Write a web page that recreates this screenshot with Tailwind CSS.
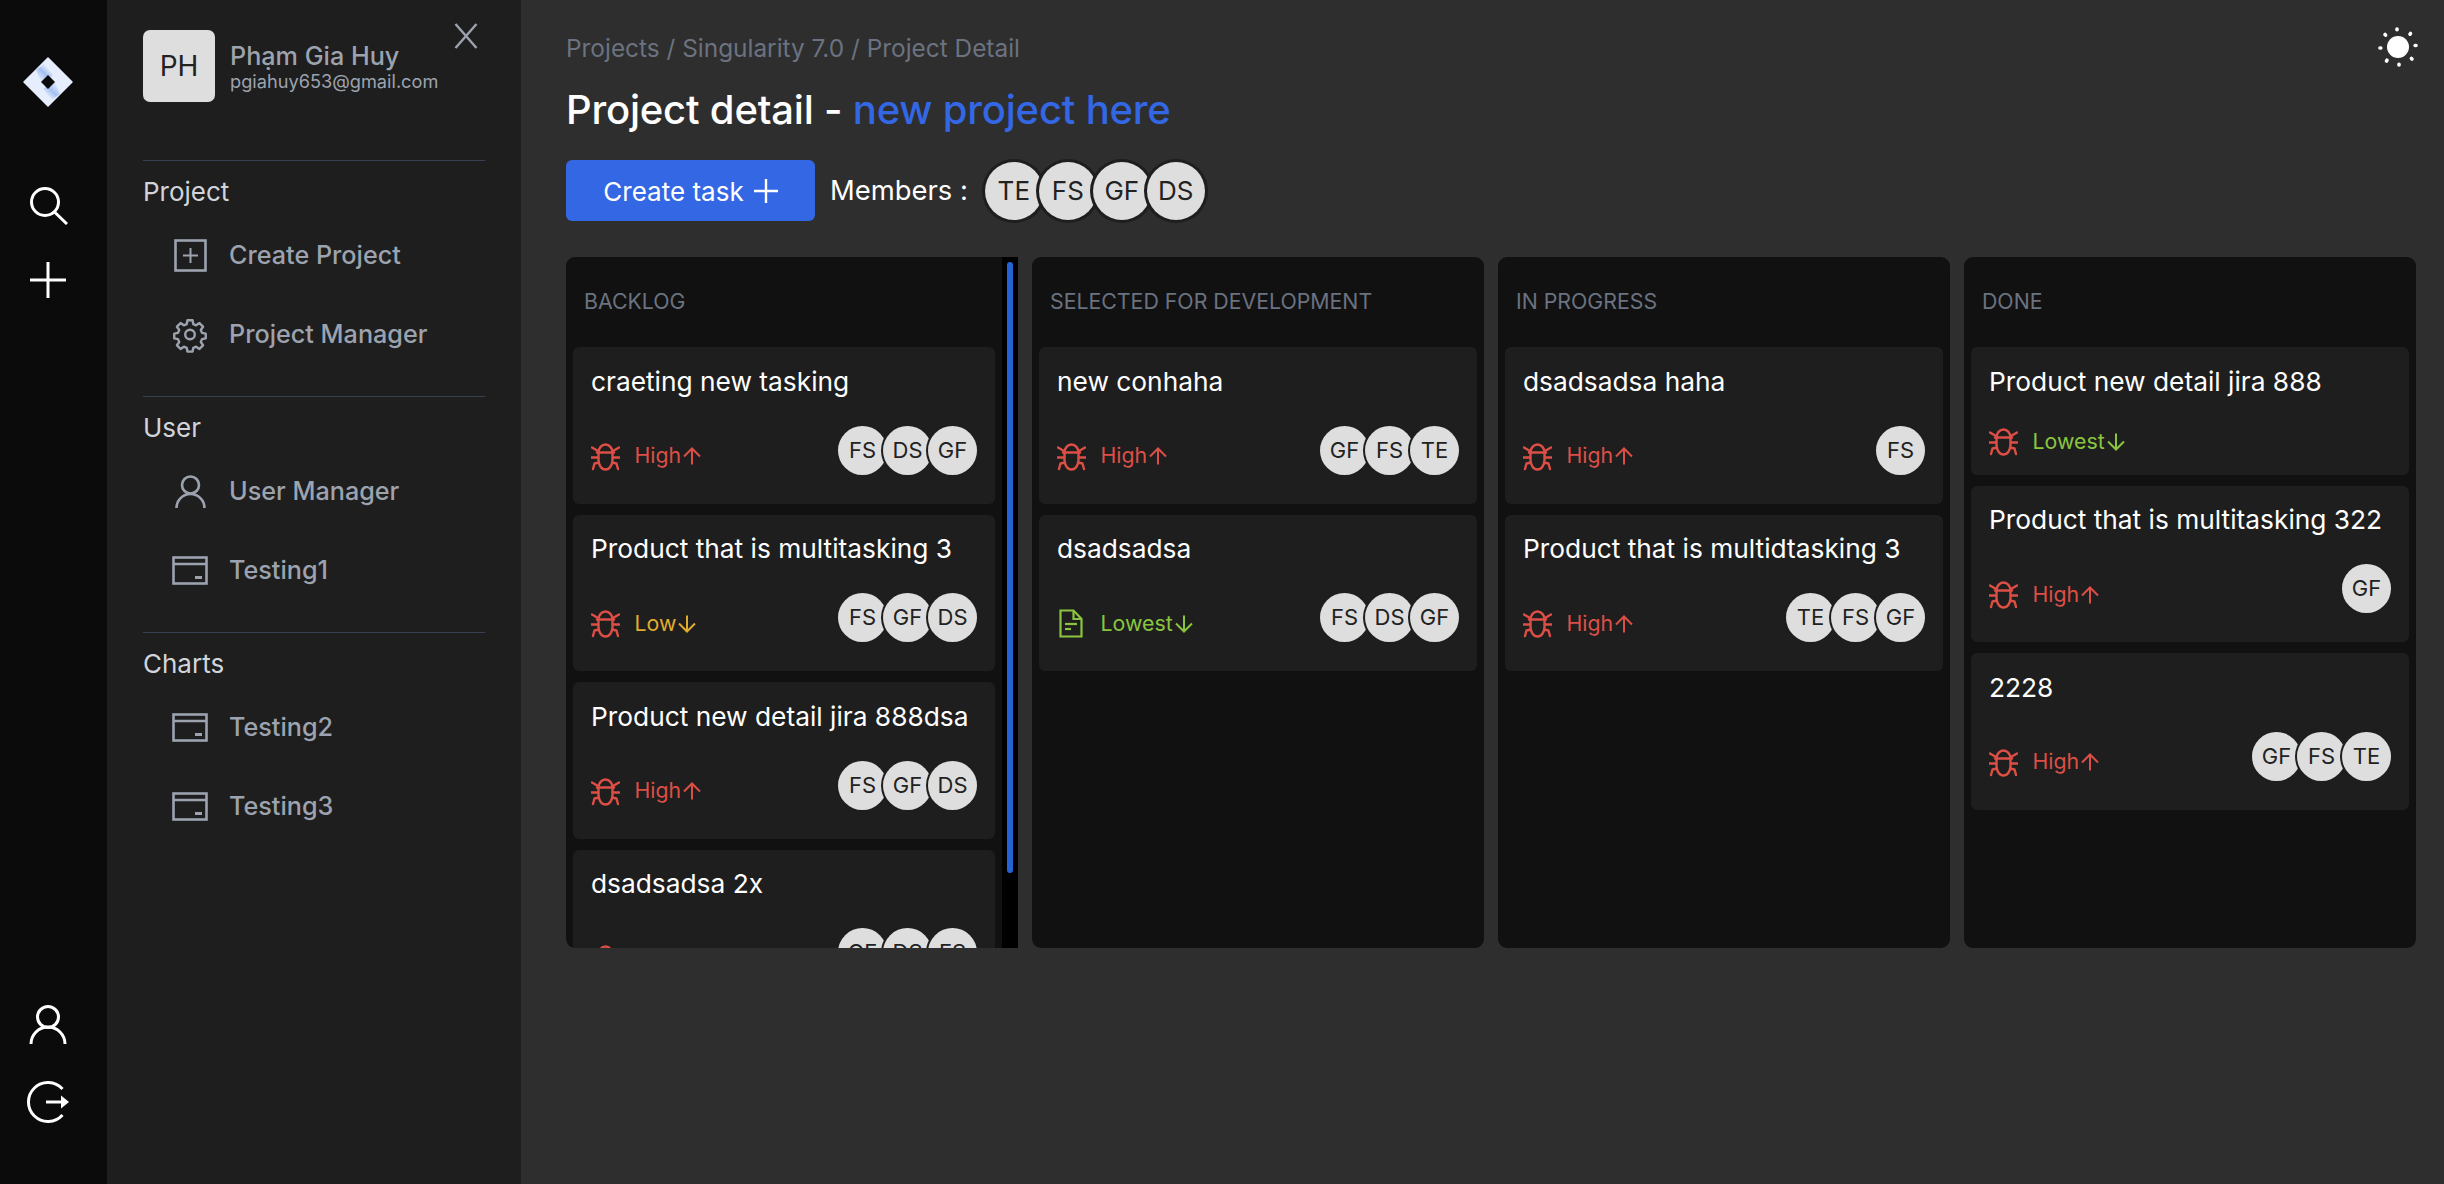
<!doctype html>
<html>
<head>
<meta charset="utf-8">
<script src="https://cdn.jsdelivr.net/npm/@tailwindcss/browser@4"></script>
<title>Project detail</title>
</head>
<body class="m-0 overflow-hidden bg-[#2e2e2e] font-['Inter',sans-serif]">
<svg class="hidden">
  <symbol id="bug" viewBox="0 0 29 29"><g fill="none" stroke="#dc4f47" stroke-width="2.4" stroke-linecap="round" stroke-linejoin="round"><path d="M7.5 10.5 a7 8 0 0 1 14 0"/><path d="M6 10.5 H23"/><path d="M7.5 10.5 V18 a7 9.5 0 0 0 14 0 V10.5"/><path d="M1 5.5 L7 9"/><path d="M28 5.5 L22 9"/><path d="M0.5 15.5 H7"/><path d="M28.5 15.5 H22"/><path d="M2 27 L3.5 21.5 L8 20.5"/><path d="M27 27 L25.5 21.5 L21 20.5"/></g></symbol>
  <symbol id="doc" viewBox="0 0 24 29"><g fill="none" stroke="#8bc53f" stroke-width="2.2"><path d="M1.5 1.5 H14.5 L22.5 10 V27.5 H1.5 Z"/><path d="M14.5 1.5 V10 H22.5"/><path d="M6 15 H18"/><path d="M6 20 H12"/></g></symbol>
  <symbol id="up" viewBox="0 0 18 18"><path d="M9 17.5 V1.5 M1 9.5 L9 1.5 L17 9.5" fill="none" stroke="currentColor" stroke-width="2"/></symbol>
  <symbol id="down" viewBox="0 0 18 18"><path d="M9 .5 V16.5 M1 8.5 L9 16.5 L17 8.5" fill="none" stroke="currentColor" stroke-width="2"/></symbol>
  <symbol id="tab" viewBox="0 0 36 30"><g fill="none" stroke="#9ca3af" stroke-width="2.6"><rect x="1.5" y="1.5" width="33" height="26"/><path d="M1.5 8 H34.5"/><path d="M23 21.5 H30" stroke-width="3"/></g></symbol>
</svg>

<div class="flex h-[1184px] w-[2444px]">
  <!-- rail -->
  <nav class="flex h-full w-[107px] shrink-0 flex-col items-center justify-between bg-[#0b0b0b] pt-[57px] pr-[11px] pb-[59px]">
    <div class="flex flex-col items-center">
      <svg class="h-[50px] w-[50px]" viewBox="0 0 50 50">
        <defs>
          <linearGradient id="g1" gradientUnits="userSpaceOnUse" x1="14" y1="21" x2="25" y2="10"><stop offset="0" stop-color="#e6eefd"/><stop offset=".55" stop-color="#a3bff0"/><stop offset="1" stop-color="#e6eefd"/></linearGradient>
          <linearGradient id="g2" gradientUnits="userSpaceOnUse" x1="36" y1="29" x2="25" y2="40"><stop offset="0" stop-color="#e6eefd"/><stop offset=".55" stop-color="#a3bff0"/><stop offset="1" stop-color="#e6eefd"/></linearGradient>
        </defs>
        <path d="M25 1 L49 25 L25 49 L1 25 Z" fill="#e6eefd" stroke="#e6eefd" stroke-width="1.5" stroke-linejoin="round"/>
        <path d="M13 13 L21 7 L30 18 L19 28 Z" fill="url(#g1)"/>
        <path d="M37 37 L29 43 L20 32 L31 22 Z" fill="url(#g2)"/>
        <path d="M25 18 L32 25 L25 32 L18 25 Z" fill="#0b0b0b"/>
      </svg>
      <svg class="mt-[78px] h-[40px] w-[40px]" viewBox="0 0 40 40" fill="none" stroke="#fff" stroke-width="3"><circle cx="17" cy="17" r="13.5"/><path d="M26.5 27 L39 39" /></svg>
      <svg class="mt-[37px] h-[36px] w-[36px]" viewBox="0 0 36 36" fill="none" stroke="#fff" stroke-width="3"><path d="M18 0 V36 M0 18 H36"/></svg>
    </div>
    <div class="flex flex-col items-center">
      <svg class="h-[40px] w-[38px]" viewBox="0 0 38 40" fill="none" stroke="#fff" stroke-width="3"><circle cx="19" cy="12" r="10.5"/><path d="M2 39 a17 17 0 0 1 34 0"/></svg>
      <svg class="mt-[36px] h-[44px] w-[44px]" viewBox="0 0 44 44"><path d="M36.5 8 A19.5 19.5 0 1 0 36.5 34" fill="none" stroke="#fff" stroke-width="3"/><path d="M20 19.5 H35 V14.5 L43 21 L35 27.5 V22.5 H20 Z" fill="#fff"/></svg>
    </div>
  </nav>

  <!-- sidebar -->
  <aside class="h-full w-[414px] shrink-0 bg-[#1e1e1e] px-[36px] pt-[30px]">
    <div class="relative mb-[58px] flex h-[72px] w-[342px] items-center">
      <div class="flex h-[72px] w-[72px] items-center justify-center rounded-[7px] bg-[#dedede] text-[28px] text-[#222]">PH</div>
      <div class="ml-[15px] flex flex-col text-[#9ca3af]">
        <span class="text-[25.2px] leading-[30px] font-medium">Phạm Gia Huy</span>
        <span class="text-[18.2px] leading-[20px]">pgiahuy653@gmail.com</span>
      </div>
      <svg class="absolute top-[-7px] right-[7px] h-[26px] w-[24px]" viewBox="0 0 24 26" fill="none" stroke="#9ca3af" stroke-width="2.4"><path d="M1.5 1 L22.5 25 M22.5 1 L1.5 25"/></svg>
    </div>

    <section class="h-[236px] border-t border-[#374151] pt-[13px]">
      <h3 class="h-[36px] text-[26px] leading-[36px] font-normal text-[#d1d5db]">Project</h3>
      <div class="mt-[6px]">
        <div class="flex h-[79px] items-center pl-[27px]">
          <span class="flex w-[40px] justify-center"><svg class="h-[33px] w-[33px]" viewBox="0 0 33 33" fill="none" stroke="#9ca3af" stroke-width="2.6"><rect x="1.5" y="1.5" width="30" height="30"/><path d="M16.5 9 V24 M9 16.5 H24" stroke-width="2"/></svg></span>
          <span class="ml-[19px] text-[25.2px] font-medium text-[#9ca3af]">Create Project</span>
        </div>
        <div class="flex h-[79px] items-center pl-[27px]">
          <span class="flex w-[40px] justify-center"><svg class="h-[37px] w-[36px]" viewBox="0 0 24 24" fill="none" stroke="#9ca3af" stroke-width="1.6" stroke-linejoin="round"><path d="M10.3 2.5h3.4l.5 2.6 1.9.8 2.2-1.5 2.4 2.4-1.5 2.2.8 1.9 2.5.5v3.2l-2.5.5-.8 1.9 1.5 2.2-2.4 2.4-2.2-1.5-1.9.8-.5 2.5h-3.4l-.5-2.5-1.9-.8-2.2 1.5-2.4-2.4 1.5-2.2-.8-1.9-2.5-.5v-3.2l2.5-.5.8-1.9-1.5-2.2 2.4-2.4 2.2 1.5 1.9-.8z"/><circle cx="12" cy="12" r="3.2"/></svg></span>
          <span class="ml-[19px] text-[25.2px] font-medium text-[#9ca3af]">Project Manager</span>
        </div>
      </div>
    </section>

    <section class="h-[236px] border-t border-[#374151] pt-[13px]">
      <h3 class="h-[36px] text-[26px] leading-[36px] font-normal text-[#d1d5db]">User</h3>
      <div class="mt-[6px]">
        <div class="flex h-[79px] items-center pl-[27px]">
          <span class="flex w-[40px] justify-center"><svg class="h-[33px] w-[31px]" viewBox="0 0 31 33" fill="none" stroke="#9ca3af" stroke-width="2.6"><circle cx="15.5" cy="10" r="8.5"/><path d="M1.5 33 a14 14 0 0 1 28 0"/></svg></span>
          <span class="ml-[19px] text-[25.2px] font-medium text-[#9ca3af]">User Manager</span>
        </div>
        <div class="flex h-[79px] items-center pl-[27px]">
          <span class="flex w-[40px] justify-center"><svg class="h-[30px] w-[36px]"><use href="#tab"/></svg></span>
          <span class="ml-[19px] text-[25.2px] font-medium text-[#9ca3af]">Testing1</span>
        </div>
      </div>
    </section>

    <section class="border-t border-[#374151] pt-[13px]">
      <h3 class="h-[36px] text-[26px] leading-[36px] font-normal text-[#d1d5db]">Charts</h3>
      <div class="mt-[6px]">
        <div class="flex h-[79px] items-center pl-[27px]">
          <span class="flex w-[40px] justify-center"><svg class="h-[30px] w-[36px]"><use href="#tab"/></svg></span>
          <span class="ml-[19px] text-[25.2px] font-medium text-[#9ca3af]">Testing2</span>
        </div>
        <div class="flex h-[79px] items-center pl-[27px]">
          <span class="flex w-[40px] justify-center"><svg class="h-[30px] w-[36px]"><use href="#tab"/></svg></span>
          <span class="ml-[19px] text-[25.2px] font-medium text-[#9ca3af]">Testing3</span>
        </div>
      </div>
    </section>
  </aside>

  <!-- main -->
  <main class="relative h-full min-w-0 flex-1 pt-[32px] pr-[28px] pl-[45px]">
    <svg class="absolute top-[27px] right-[26px] h-[40px] w-[40px]" viewBox="0 0 40 40"><circle cx="20" cy="20" r="11" fill="#fff"/><g stroke="#fff" stroke-width="3.6" stroke-linecap="round"><path d="M19 2 V2.8"/><path d="M32.5 6.5 L32 7.2"/><path d="M38 18.5 H37.2"/><path d="M34 32 L33.4 31.4"/><path d="M21 38 V37.2"/><path d="M8.5 34 L9 33.2"/><path d="M2 21 H2.8"/><path d="M7 7.5 L7.6 8.2"/></g></svg>

    <div class="h-[32px] text-[24.4px] leading-[32px] text-[#6b7280]">Projects / Singularity 7.0 / Project Detail</div>
    <h1 class="mt-[23px] h-[46px] text-[40px] leading-[46px] font-medium tracking-[-0.2px] text-white">Project detail - <span class="text-[#3367e4]">new project here</span></h1>
    <div class="mt-[27px] flex h-[61px] items-center">
      <button class="flex h-[61px] w-[249px] items-center justify-center gap-[10px] rounded-[6px] bg-[#3367e4] pt-[1px] text-[26px] text-white">Create task <svg class="h-[24px] w-[24px]" viewBox="0 0 24 24" fill="none" stroke="#fff" stroke-width="2.4"><path d="M12 0 V24 M0 12 H24"/></svg></button>
      <span class="ml-[15px] text-[27.4px] text-white">Members :</span>
      <div class="ml-[17px] flex [&>span]:flex [&>span]:h-[58px] [&>span]:w-[58px] [&>span]:items-center [&>span]:justify-center [&>span]:rounded-full [&>span]:bg-[#dedede] [&>span]:text-[26px] [&>span]:text-[#222] [&>span]:ring-3 [&>span]:ring-[#1e1e1e] [&>span+span]:-ml-[4px]">
        <span>TE</span><span>FS</span><span>GF</span><span>DS</span>
      </div>
    </div>

    <div class="mt-[36px] grid h-[691px] grid-cols-4 gap-[14px]">
      <!-- backlog -->
      <div class="flex overflow-hidden rounded-l-[9px] bg-[#111111]">
        <div class="min-w-0 flex-1 overflow-hidden">
          <h2 class="h-[90px] pt-[30px] pl-[18px] text-[21.3px] leading-[28px] font-normal text-[#6b7280] uppercase">Backlog</h2>
          <div class="flex flex-col gap-[11px] pr-[7px] pl-[7px]">
            <article class="rounded-[6px] bg-[#1e1e1e] px-[18px] pt-[16.6px] pb-[17px]">
              <p class="h-[36px] text-[26.3px] leading-[36px] text-white">craeting new tasking</p>
              <div class="mt-[26px] flex items-center justify-between">
                <div class="flex h-[32px] items-center text-[#dc4f47]"><svg class="h-[29px] w-[29px]"><use href="#bug"/></svg><span class="ml-[14.5px] text-[21.3px]">High</span><svg class="ml-[2px] h-[18px] w-[18px]"><use href="#up"/></svg></div>
                <div class="flex pb-[12px] text-[#222] [&>span]:flex [&>span]:h-[49px] [&>span]:w-[49px] [&>span]:items-center [&>span]:justify-center [&>span]:rounded-full [&>span]:bg-[#dedede] [&>span]:text-[22px] [&>span]:ring-2 [&>span]:ring-[#1e1e1e] [&>span+span]:-ml-[4px]"><span>FS</span><span>DS</span><span>GF</span></div>
              </div>
            </article>
            <article class="rounded-[6px] bg-[#1e1e1e] px-[18px] pt-[16.6px] pb-[17px]">
              <p class="h-[36px] text-[26.3px] leading-[36px] text-white">Product that is multitasking 3</p>
              <div class="mt-[26px] flex items-center justify-between">
                <div class="flex h-[32px] items-center text-[#e0ac2f]"><svg class="h-[29px] w-[29px]"><use href="#bug"/></svg><span class="ml-[14.5px] text-[21.3px]">Low</span><svg class="ml-[2px] h-[18px] w-[18px]"><use href="#down"/></svg></div>
                <div class="flex pb-[12px] text-[#222] [&>span]:flex [&>span]:h-[49px] [&>span]:w-[49px] [&>span]:items-center [&>span]:justify-center [&>span]:rounded-full [&>span]:bg-[#dedede] [&>span]:text-[22px] [&>span]:ring-2 [&>span]:ring-[#1e1e1e] [&>span+span]:-ml-[4px]"><span>FS</span><span>GF</span><span>DS</span></div>
              </div>
            </article>
            <article class="rounded-[6px] bg-[#1e1e1e] px-[18px] pt-[16.6px] pb-[17px]">
              <p class="h-[36px] text-[26.3px] leading-[36px] text-white">Product new detail jira 888dsa</p>
              <div class="mt-[26px] flex items-center justify-between">
                <div class="flex h-[32px] items-center text-[#dc4f47]"><svg class="h-[29px] w-[29px]"><use href="#bug"/></svg><span class="ml-[14.5px] text-[21.3px]">High</span><svg class="ml-[2px] h-[18px] w-[18px]"><use href="#up"/></svg></div>
                <div class="flex pb-[12px] text-[#222] [&>span]:flex [&>span]:h-[49px] [&>span]:w-[49px] [&>span]:items-center [&>span]:justify-center [&>span]:rounded-full [&>span]:bg-[#dedede] [&>span]:text-[22px] [&>span]:ring-2 [&>span]:ring-[#1e1e1e] [&>span+span]:-ml-[4px]"><span>FS</span><span>GF</span><span>DS</span></div>
              </div>
            </article>
            <article class="rounded-[6px] bg-[#1e1e1e] px-[18px] pt-[16.6px] pb-[17px]">
              <p class="h-[36px] text-[26.3px] leading-[36px] text-white">dsadsadsa 2x</p>
              <div class="mt-[26px] flex items-center justify-between">
                <div class="flex h-[32px] items-center text-[#dc4f47]"><svg class="h-[29px] w-[29px]"><use href="#bug"/></svg><span class="ml-[14.5px] text-[21.3px]">High</span><svg class="ml-[2px] h-[18px] w-[18px]"><use href="#up"/></svg></div>
                <div class="flex pb-[12px] text-[#222] [&>span]:flex [&>span]:h-[49px] [&>span]:w-[49px] [&>span]:items-center [&>span]:justify-center [&>span]:rounded-full [&>span]:bg-[#dedede] [&>span]:text-[22px] [&>span]:ring-2 [&>span]:ring-[#1e1e1e] [&>span+span]:-ml-[4px]"><span>GF</span><span>DS</span><span>FS</span></div>
              </div>
            </article>
          </div>
        </div>
        <div class="w-[16px] shrink-0 bg-black pt-[5px] pl-[5px]"><div class="h-[611px] w-[6px] rounded-full bg-[#2563d4]"></div></div>
      </div>

      <!-- selected -->
      <div class="overflow-hidden rounded-[9px] bg-[#111111]">
        <h2 class="h-[90px] pt-[30px] pl-[18px] text-[21.3px] leading-[28px] font-normal text-[#6b7280] uppercase">Selected for Development</h2>
        <div class="flex flex-col gap-[11px] px-[7px]">
          <article class="rounded-[6px] bg-[#1e1e1e] px-[18px] pt-[16.6px] pb-[17px]">
            <p class="h-[36px] text-[26.3px] leading-[36px] text-white">new conhaha</p>
            <div class="mt-[26px] flex items-center justify-between">
              <div class="flex h-[32px] items-center text-[#dc4f47]"><svg class="h-[29px] w-[29px]"><use href="#bug"/></svg><span class="ml-[14.5px] text-[21.3px]">High</span><svg class="ml-[2px] h-[18px] w-[18px]"><use href="#up"/></svg></div>
              <div class="flex pb-[12px] text-[#222] [&>span]:flex [&>span]:h-[49px] [&>span]:w-[49px] [&>span]:items-center [&>span]:justify-center [&>span]:rounded-full [&>span]:bg-[#dedede] [&>span]:text-[22px] [&>span]:ring-2 [&>span]:ring-[#1e1e1e] [&>span+span]:-ml-[4px]"><span>GF</span><span>FS</span><span>TE</span></div>
            </div>
          </article>
          <article class="rounded-[6px] bg-[#1e1e1e] px-[18px] pt-[16.6px] pb-[17px]">
            <p class="h-[36px] text-[26.3px] leading-[36px] text-white">dsadsadsa</p>
            <div class="mt-[26px] flex items-center justify-between">
              <div class="flex h-[32px] items-center text-[#8bc53f]"><svg class="mr-[2px] ml-[2px] h-[29px] w-[24px]"><use href="#doc"/></svg><span class="ml-[15.5px] text-[21.3px]">Lowest</span><svg class="ml-[2px] h-[18px] w-[18px]"><use href="#down"/></svg></div>
              <div class="flex pb-[12px] text-[#222] [&>span]:flex [&>span]:h-[49px] [&>span]:w-[49px] [&>span]:items-center [&>span]:justify-center [&>span]:rounded-full [&>span]:bg-[#dedede] [&>span]:text-[22px] [&>span]:ring-2 [&>span]:ring-[#1e1e1e] [&>span+span]:-ml-[4px]"><span>FS</span><span>DS</span><span>GF</span></div>
            </div>
          </article>
        </div>
      </div>

      <!-- in progress -->
      <div class="overflow-hidden rounded-[9px] bg-[#111111]">
        <h2 class="h-[90px] pt-[30px] pl-[18px] text-[21.3px] leading-[28px] font-normal text-[#6b7280] uppercase">In Progress</h2>
        <div class="flex flex-col gap-[11px] px-[7px]">
          <article class="rounded-[6px] bg-[#1e1e1e] px-[18px] pt-[16.6px] pb-[17px]">
            <p class="h-[36px] text-[26.3px] leading-[36px] text-white">dsadsadsa haha</p>
            <div class="mt-[26px] flex items-center justify-between">
              <div class="flex h-[32px] items-center text-[#dc4f47]"><svg class="h-[29px] w-[29px]"><use href="#bug"/></svg><span class="ml-[14.5px] text-[21.3px]">High</span><svg class="ml-[2px] h-[18px] w-[18px]"><use href="#up"/></svg></div>
              <div class="flex pb-[12px] text-[#222] [&>span]:flex [&>span]:h-[49px] [&>span]:w-[49px] [&>span]:items-center [&>span]:justify-center [&>span]:rounded-full [&>span]:bg-[#dedede] [&>span]:text-[22px] [&>span]:ring-2 [&>span]:ring-[#1e1e1e] [&>span+span]:-ml-[4px]"><span>FS</span></div>
            </div>
          </article>
          <article class="rounded-[6px] bg-[#1e1e1e] px-[18px] pt-[16.6px] pb-[17px]">
            <p class="h-[36px] text-[26.3px] leading-[36px] text-white">Product that is multidtasking 3</p>
            <div class="mt-[26px] flex items-center justify-between">
              <div class="flex h-[32px] items-center text-[#dc4f47]"><svg class="h-[29px] w-[29px]"><use href="#bug"/></svg><span class="ml-[14.5px] text-[21.3px]">High</span><svg class="ml-[2px] h-[18px] w-[18px]"><use href="#up"/></svg></div>
              <div class="flex pb-[12px] text-[#222] [&>span]:flex [&>span]:h-[49px] [&>span]:w-[49px] [&>span]:items-center [&>span]:justify-center [&>span]:rounded-full [&>span]:bg-[#dedede] [&>span]:text-[22px] [&>span]:ring-2 [&>span]:ring-[#1e1e1e] [&>span+span]:-ml-[4px]"><span>TE</span><span>FS</span><span>GF</span></div>
            </div>
          </article>
        </div>
      </div>

      <!-- done -->
      <div class="overflow-hidden rounded-[9px] bg-[#111111]">
        <h2 class="h-[90px] pt-[30px] pl-[18px] text-[21.3px] leading-[28px] font-normal text-[#6b7280] uppercase">Done</h2>
        <div class="flex flex-col gap-[11px] px-[7px]">
          <article class="rounded-[6px] bg-[#1e1e1e] px-[18px] pt-[16.6px] pb-[17px]">
            <p class="h-[36px] text-[26.3px] leading-[36px] text-white">Product new detail jira 888</p>
            <div class="mt-[26px] flex items-center justify-between">
              <div class="flex h-[32px] items-center text-[#8bc53f]"><svg class="h-[29px] w-[29px]"><use href="#bug"/></svg><span class="ml-[14.5px] text-[21.3px]">Lowest</span><svg class="ml-[2px] h-[18px] w-[18px]"><use href="#down"/></svg></div>
            </div>
          </article>
          <article class="rounded-[6px] bg-[#1e1e1e] px-[18px] pt-[16.6px] pb-[17px]">
            <p class="h-[36px] text-[26.3px] leading-[36px] text-white">Product that is multitasking 322</p>
            <div class="mt-[26px] flex items-center justify-between">
              <div class="flex h-[32px] items-center text-[#dc4f47]"><svg class="h-[29px] w-[29px]"><use href="#bug"/></svg><span class="ml-[14.5px] text-[21.3px]">High</span><svg class="ml-[2px] h-[18px] w-[18px]"><use href="#up"/></svg></div>
              <div class="flex pb-[12px] text-[#222] [&>span]:flex [&>span]:h-[49px] [&>span]:w-[49px] [&>span]:items-center [&>span]:justify-center [&>span]:rounded-full [&>span]:bg-[#dedede] [&>span]:text-[22px] [&>span]:ring-2 [&>span]:ring-[#1e1e1e] [&>span+span]:-ml-[4px]"><span>GF</span></div>
            </div>
          </article>
          <article class="rounded-[6px] bg-[#1e1e1e] px-[18px] pt-[16.6px] pb-[17px]">
            <p class="h-[36px] text-[26.3px] leading-[36px] text-white">2228</p>
            <div class="mt-[26px] flex items-center justify-between">
              <div class="flex h-[32px] items-center text-[#dc4f47]"><svg class="h-[29px] w-[29px]"><use href="#bug"/></svg><span class="ml-[14.5px] text-[21.3px]">High</span><svg class="ml-[2px] h-[18px] w-[18px]"><use href="#up"/></svg></div>
              <div class="flex pb-[12px] text-[#222] [&>span]:flex [&>span]:h-[49px] [&>span]:w-[49px] [&>span]:items-center [&>span]:justify-center [&>span]:rounded-full [&>span]:bg-[#dedede] [&>span]:text-[22px] [&>span]:ring-2 [&>span]:ring-[#1e1e1e] [&>span+span]:-ml-[4px]"><span>GF</span><span>FS</span><span>TE</span></div>
            </div>
          </article>
        </div>
      </div>
    </div>
  </main>
</div>
</body>
</html>
